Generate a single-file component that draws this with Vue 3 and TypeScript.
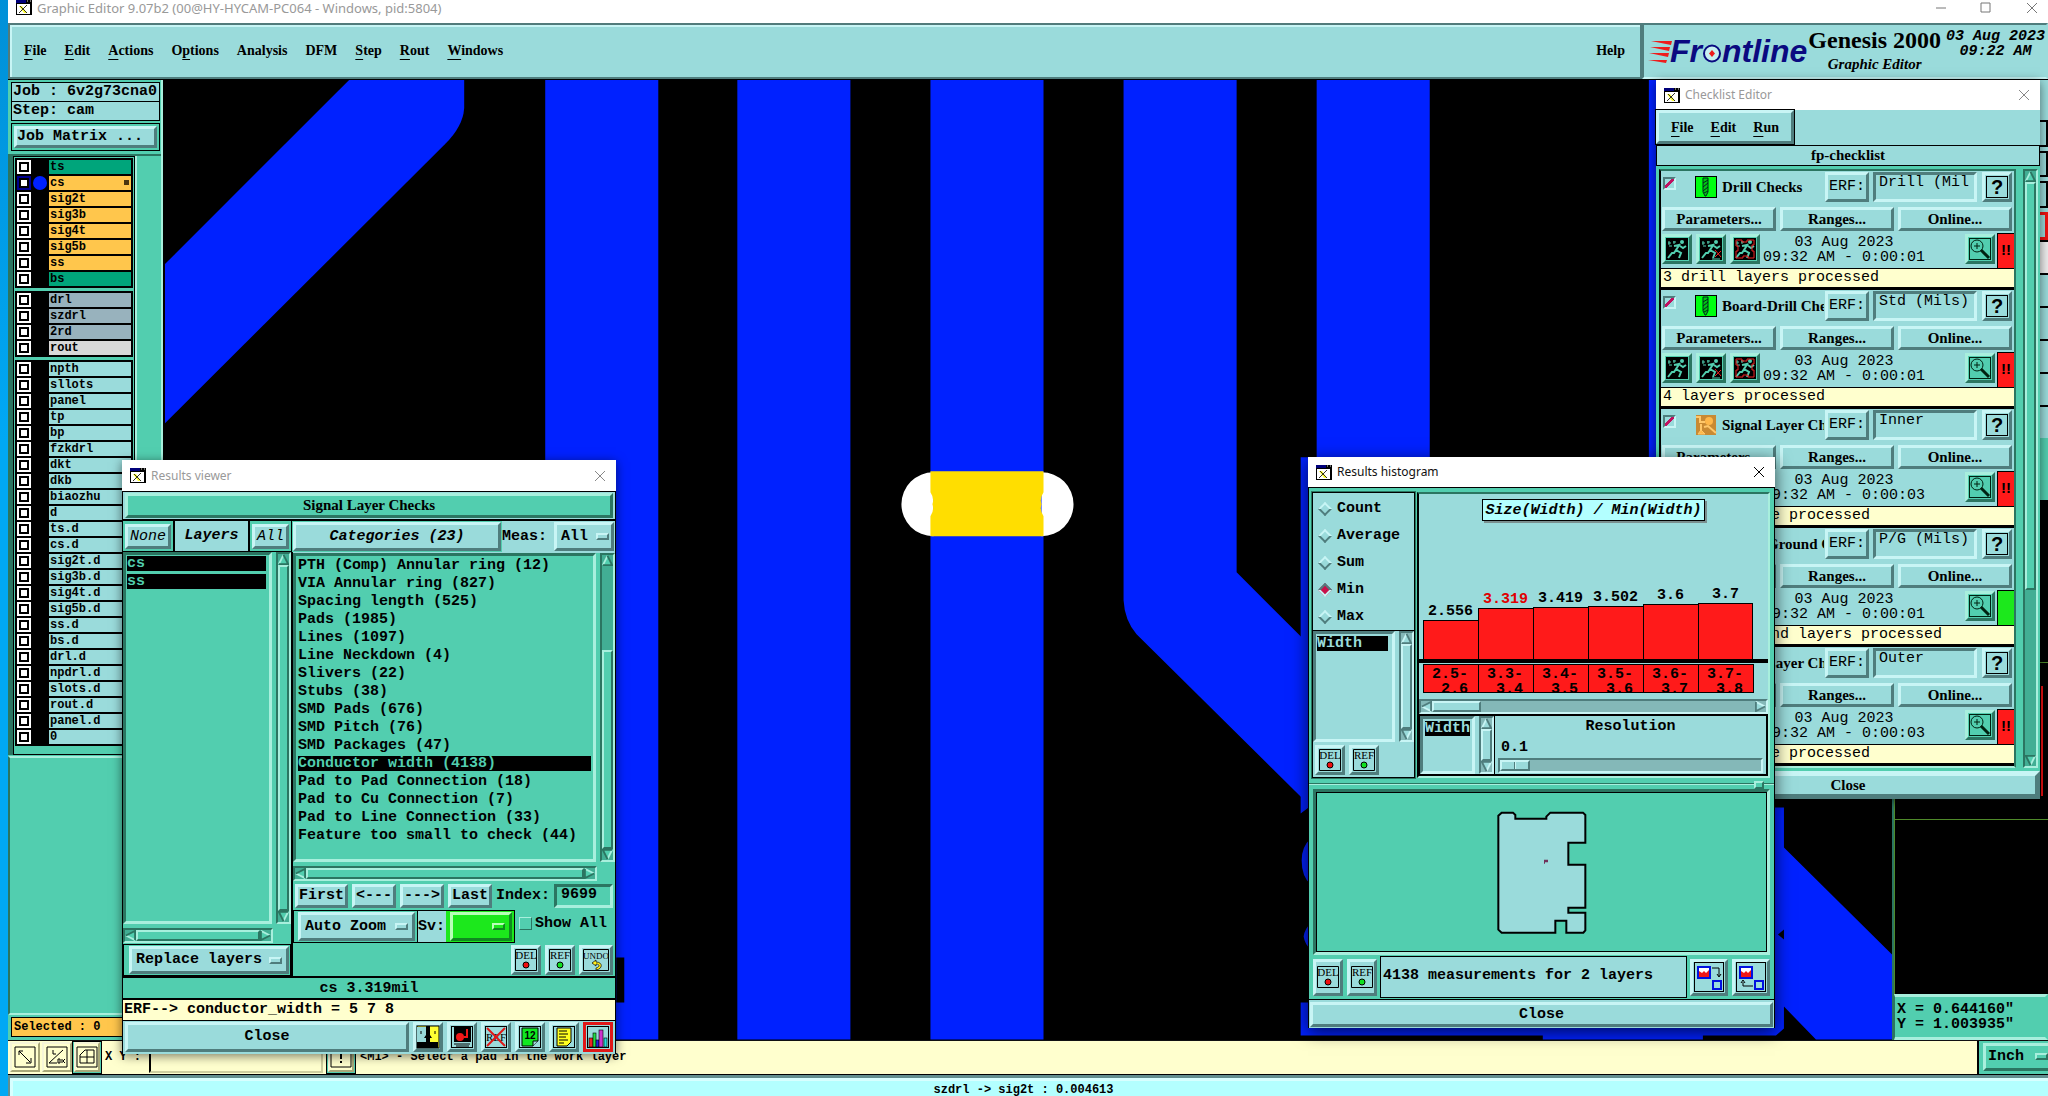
<script setup lang="ts">
import { h, ref } from 'vue'

interface Layer { name: string; kind: string; active?: boolean }
interface Check {
  name: string; icon: string; erf: string; time: string; message: string; ok?: boolean
}

const menus = [
  ['F', 'ile', ''], ['E', 'dit', ''], ['A', 'ctions', ''], ['p', 'tions', 'O'], ['', 'Analysis', ''],
  ['', 'DFM', ''], ['S', 'tep', ''], ['R', 'out', ''], ['W', 'indows', ''],
]
const checkMenus = [['F', 'ile'], ['E', 'dit'], ['R', 'un']]

const make = (kind: string, names: string): Layer[] => names.split(' ').map((name) => ({ name, kind }))
const layerGroups: Layer[][] = [
  [
    ...make('mask', 'ts'),
    { name: 'cs', kind: 'signal', active: true },
    ...make('signal', 'sig2t sig3b sig4t sig5b ss'),
    ...make('mask', 'bs'),
  ],
  [...make('drill', 'drl szdrl 2rd'), ...make('rout', 'rout')],
  make('misc', 'npth sllots panel tp bp fzkdrl dkt dkb biaozhu d ts.d cs.d sig2t.d sig3b.d sig4t.d sig5b.d ss.d bs.d drl.d npdrl.d slots.d rout.d panel.d 0'),
]

const categories = [
  'PTH (Comp) Annular ring (12)', 'VIA Annular ring (827)', 'Spacing length (525)', 'Pads (1985)',
  'Lines (1097)', 'Line Neckdown (4)', 'Slivers (22)', 'Stubs (38)', 'SMD Pads (676)', 'SMD Pitch (76)',
  'SMD Packages (47)', 'Conductor width (4138)', 'Pad to Pad Connection (18)', 'Pad to Cu Connection (7)',
  'Pad to Line Connection (33)', 'Feature too small to check (44)',
]
const selectedCategory = ref(11)

const checks: Check[] = [
  { name: 'Drill Checks', icon: 'drill', erf: 'Drill (Mil', time: '09:32 AM - 0:00:01', message: '3 drill layers processed' },
  { name: 'Board-Drill Che', icon: 'drill', erf: 'Std (Mils)', time: '09:32 AM - 0:00:01', message: '4 layers processed' },
  { name: 'Signal Layer Ch', icon: 'signal', erf: 'Inner', time: '09:32 AM - 0:00:03', message: '4 layers were processed' },
  { name: 'Power/Ground C', icon: 'signal', erf: 'P/G (Mils)', time: '09:32 AM - 0:00:01', message: '2 power ground layers processed', ok: true },
  { name: 'Signal Layer Ch', icon: 'signal', erf: 'Outer', time: '09:32 AM - 0:00:03', message: '2 layers were processed' },
]

const stats = ['Count', 'Average', 'Sum', 'Min', 'Max']
const stat = ref('Min')
const bars = [
  { value: '2.556', height: 39, from: '2.5-', to: '2.6' },
  { value: '3.319', height: 51, from: '3.3-', to: '3.4', current: true },
  { value: '3.419', height: 52, from: '3.4-', to: '3.5' },
  { value: '3.502', height: 53, from: '3.5-', to: '3.6' },
  { value: '3.6', height: 55, from: '3.6-', to: '3.7' },
  { value: '3.7', height: 56, from: '3.7-', to: '3.8' },
]
const footIcons = ['face', 'screen', 'noref', 'page12', 'note', 'chart']

/* Captioned action icon: a boxed word over a coloured mark */
const Tag = (props: { word: string; mark: string }) => {
  const w = props.word === 'UNDO' ? 28 : 24
  return h('svg', { width: w, height: 24, viewBox: `0 0 ${w} 24` }, [
    h('path', { d: `M1.500 1.500h${w - 3}v21h-${w - 3}z`, fill: 'none', stroke: '#000' }),
    h('text', { x: w / 2, y: 11, 'text-anchor': 'middle', 'font-family': 'Liberation Serif', 'font-weight': 'normal', 'font-size': w === 28 ? 9 : 11 }, props.word),
    props.mark === 'undo'
      ? h('path', { d: 'M14 12l-4 3 4 3v-2c4 0 4 3 0 4v2c7-1 7-8 0-8z', fill: '#ffef20', stroke: '#000', 'stroke-width': 0.7 })
      : h('circle', { cx: 12, cy: 17, r: 3, fill: props.mark, stroke: '#000' }),
  ])
}
Tag.props = ['word', 'mark']

/* Motif scroll bar: two arrows, with the thumb placed by percentages of the trough */
const arrow = (dir: string) =>
  h('svg', { class: ['arrow', dir], viewBox: '0 0 12 12' }, [
    h('path', { class: 'face', d: 'M6 1 L11 11 L1 11 Z' }),
    h('path', { class: 'lit', d: 'M6 1 L1 11' }),
    h('path', { class: 'dim', d: 'M6 1 L11 11 L1 11' }),
  ])
const ScrollBar = (props: { axis: string; start?: number; size?: number }) =>
  h('div', { class: ['sb', props.axis] }, [
    arrow(props.axis === 'v' ? 'to-up' : 'to-left'),
    h('div', { class: 'track' }, [
      h('div', { style: { flex: `${props.start ?? 0} 0 0` } }),
      h('div', { class: 'thumb', style: { flex: `${props.size ?? 100} 0 0` } }),
      h('div', { style: { flex: `${100 - (props.start ?? 0) - (props.size ?? 100)} 0 0` } }),
    ]),
    arrow(props.axis === 'v' ? 'to-down' : 'to-right'),
  ])
ScrollBar.props = ['axis', 'start', 'size']
</script>

<template>
  <div class="desktop">
    <svg class="defs" aria-hidden="true">
      <symbol id="xwin" viewBox="0 0 16 15">
        <rect width="16" height="15" fill="#000" /><rect x="1" y="4" width="13" height="10" fill="#fff" />
        <rect x="0" y="0" width="10" height="3" fill="#00007a" />
        <path d="M11 1h1M14 1h1" stroke="#ddd" />
        <path d="M3 6h3l5 7H8z" fill="#ffff30" /><path d="M11 5L3 13M4 6l7 7" stroke="#332" stroke-width="1" />
      </symbol>
      <symbol id="face" viewBox="0 0 24 24">
        <rect x="1" y="1" width="22" height="22" fill="#ff3" stroke="#000" /><rect x="1" y="2" width="10" height="20" fill="#98d8d8" />
        <path d="M10 1h4v9l2 3h-2v4h8v6H1v-6h9v-4H8l2-3z" /><path d="M5 6v3M19 6v3" stroke="#000" />
      </symbol>
      <symbol id="screen" viewBox="0 0 24 24">
        <rect x="1.500" y="1.500" width="21" height="21" fill="none" stroke="#000" />
        <rect x="4" y="2" width="17" height="15" /><circle cx="10" cy="12" r="4" fill="#f01818" /><path d="M14 12h3V4" stroke="#f01818" stroke-width="2" fill="none" />
        <path d="M4 19h16M6 21h13" stroke="#000" />
      </symbol>
      <symbol id="noref" viewBox="0 0 24 24">
        <rect x="1.500" y="1.500" width="21" height="21" fill="none" stroke="#000" />
        <path d="M3 3l18 18M21 3L3 21" stroke="#e01818" stroke-width="2" />
      </symbol>
      <symbol id="page12" viewBox="0 0 24 24">
        <rect x="1.500" y="1.500" width="21" height="21" fill="none" stroke="#000" />
        <path d="M4 3h16v13l-5 5H4z" fill="#10e820" stroke="#000" /><path d="M15 21v-5h5" fill="#9adbdb" stroke="#000" />
      </symbol>
      <symbol id="note" viewBox="0 0 24 24">
        <rect x="1.500" y="1.500" width="21" height="21" fill="none" stroke="#000" />
        <path d="M5 3h14v14l-4 4H5z" fill="#ffff20" stroke="#000" /><path d="M7 6h8M7 9h9M7 12h7M7 15h9M7 18h5" stroke="#000" />
      </symbol>
      <symbol id="chart" viewBox="0 0 24 24">
        <rect x="1.500" y="1.500" width="21" height="21" fill="none" stroke="#000" />
        <g stroke="#000" stroke-width=".6"><rect x="3" y="13" width="4" height="9" fill="#e22" /><rect x="7" y="8" width="3" height="14" fill="#2d4" /><rect x="10" y="15" width="3" height="7" fill="#22d" /><rect x="13" y="5" width="4" height="17" fill="#c3c" /><rect x="18" y="13" width="3" height="9" fill="#2dd" /></g>
      </symbol>
      <symbol id="drill" viewBox="0 0 22 22">
        <rect x=".5" y=".5" width="21" height="21" fill="#00ff10" stroke="#000" />
        <path d="M8 2h5v14l-2 4h-1l-2-4z" fill="#00c810" stroke="#022" /><path d="M8 7l5-3M8 11l5-4M8 15l5-4M9 17l4-2" stroke="#022" />
      </symbol>
      <symbol id="signal" viewBox="0 0 22 22">
        <rect x="1" y="1" width="20" height="20" fill="#c98a33" />
        <path d="M1 3h4v5h5M6 10v8M9 13l4-1 8 7" fill="none" stroke="#ffc86a" stroke-width="2" /><circle cx="14" cy="7" r="4" fill="#ffb84a" /><path d="M6 16l-3 4h7z" fill="#ffb84a" stroke="#ffc86a" />
      </symbol>
      <symbol id="run" viewBox="0 0 24 24">
        <rect x="1" y="1" width="22" height="22" />
        <circle cx="17" cy="5" r="2" fill="#52ceaf" />
        <path d="M15 7l-4 6 5 3-2 5M11 13l-2 3H7l-4 5M14 8l-5 1M15 9l3 2 3-2" fill="none" stroke="#52ceaf" stroke-width="2" />
        <path d="M3 6h3M8 5h3M4 9h3M4 4v4M9 4v3" stroke="#52ceaf" />
      </symbol>
      <symbol id="runx" viewBox="0 0 24 24">
        <use href="#run" width="24" height="24" /><path d="M16 13l6 7M22 14l-6 6" stroke="#e22" /><path d="M13 22h8" stroke="#52ceaf" />
      </symbol>
      <symbol id="runbox" viewBox="0 0 24 24">
        <use href="#run" width="24" height="24" /><path d="M3 3h6v2h5V3h7v5h-2v6h2v7h-6v-2h-5v2H3v-7h2V9H3z" fill="none" stroke="#e22" />
      </symbol>
      <symbol id="mag" viewBox="0 0 24 24">
        <rect x="1.500" y="1.500" width="21" height="21" fill="none" stroke="#021" />
        <circle cx="9" cy="9" r="6" fill="none" stroke="#021" /><path d="M9 6v6M6 9h6" stroke="#021" /><path d="M13 13l8 8" stroke="#021" stroke-width="3" />
      </symbol>
      <symbol id="todown" viewBox="0 0 32 32">
        <rect x="1.500" y="1.500" width="29" height="29" fill="none" stroke="#000" />
        <rect x="5" y="6" width="12" height="11" fill="#fff" stroke="#0010e0" stroke-width="2" /><path d="M6 16V10l3 2 2-2 2 2 3-3v7z" fill="#f01818" />
        <path d="M19 7h7v8M24 13l2 3 2-3" fill="none" stroke="#000" /><rect x="20" y="20" width="8" height="8" fill="none" stroke="#0010e0" stroke-width="2" />
      </symbol>
      <symbol id="toup" viewBox="0 0 32 32">
        <rect x="1.500" y="1.500" width="29" height="29" fill="none" stroke="#000" />
        <rect x="5" y="6" width="12" height="11" fill="#fff" stroke="#0010e0" stroke-width="2" /><path d="M6 16V10l3 2 2-2 2 2 3-3v7z" fill="#f01818" />
        <path d="M18 25H8v-4M6 22l2-3 2 3" fill="none" stroke="#000" /><rect x="20" y="20" width="8" height="8" fill="none" stroke="#0010e0" stroke-width="2" />
      </symbol>
    </svg>

    <!-- main editor -->
    <main class="editor">
      <header class="titlebar main-title">
        <svg class="xicon"><use href="#xwin" /></svg>
        <span>Graphic Editor 9.07b2 (00@HY-HYCAM-PC064 - Windows, pid:5804)</span>
        <svg class="win-controls" width="120" height="14" viewBox="0 0 120 14"><path d="M8 7h10M53 2h9v9h-9zM99 2l10 10M109 2L99 12" fill="none" stroke="#777" /></svg>
      </header>

      <div class="topbar">
        <nav class="menubar">
          <a v-for="m in menus" :key="m[1]" href="#">{{ m[2] }}<u>{{ m[0] }}</u>{{ m[1] }}</a>
          <a href="#" class="help">Help</a>
        </nav>
        <div class="brand">
          <div class="logo">
            <svg width="24" height="26" viewBox="0 0 24 26"><path d="M3 3h21l-1 4zM2 9h20l-1 4zM1 15h20l-1 4zM0 22h19l-1 3z" fill="#ee1c1c" /></svg>
            <span>Fr<svg class="ring" width="20" height="21" viewBox="0 0 20 21"><circle cx="10" cy="10.500" r="8" fill="#c8f0f0" stroke="#0a0a80" stroke-width="2" /><path d="M10 7l3 3.500-3 3.500-3-3.500z" fill="#ee1c1c" /></svg>ntline</span>
          </div>
          <div class="product"><strong>Genesis 2000</strong><em>Graphic Editor</em></div>
          <div class="clock">03 Aug 2023<br />09:22 AM</div>
        </div>
      </div>

      <div class="work">
        <aside class="side">
          <div class="job">Job : 6v2g73cna0</div>
          <div class="job">Step: cam</div>
          <div class="matrix"><button class="up">Job Matrix ...</button></div>
          <div class="layer-area">
            <div class="layers">
              <div v-for="(group, g) in layerGroups" :key="g" class="group">
                <label v-for="layer in group" :key="layer.name" class="layer" :class="[layer.kind, { active: layer.active }]">
                  <input type="checkbox" /><i></i><span>{{ layer.name }}</span>
                </label>
              </div>
            </div>
            <div class="gutter"></div>
          </div>
          <div class="side-rest"></div>
          <div class="selected">Selected : 0</div>
        </aside>

        <svg class="canvas" viewBox="163 80 1728 959" preserveAspectRatio="xMinYMin slice">
          <g fill="#0021ff">
            <path d="M349 80H464V108Q463 126 445 144L165 423V264Z" />
            <path d="M545 80h113v959H545zM737 80h113v959H737zM930 80h113v959H930zM1316 80h113v380h-113z" />
            <path d="M1123 80h113v492l74 74v160L1136 634Q1124 620 1123 600z" />
            <path d="M1648 80h12v400h-12z" />
            <path d="M1300 457h20v340l-12 10-8 6zM1301 860q0-14 9-22v46q-9-8-9-24zM1303 936q1-8 8-14v28q-7-6-8-14z" />
            <path d="M1300 1002h30v-10h440V807h13v40l108 107v85h-76l-32-33v22l-8 7h-73v4h-160v-4h-242z" />
          </g>
          <path d="M616 957h8v45h-8zM1783 929v10l-6-5z" />
          <path d="M933 472a32 32 0 0 0 0 64zM1041 472a32 32 0 0 1 0 64z" fill="#fff" />
          <path d="M930 471h113v21q-4 6-2 12-2 6 2 12v20H930v-20q4-6 2-12 2-6-2-12z" fill="#ffde00" />
        </svg>

        <aside class="right">
          <div class="tools"><i v-for="n in 3" :key="n"></i><i class="hot"></i></div>
          <div class="cells"><i class="blank"></i><i v-for="n in 5" :key="n"></i></div>
          <div class="tail"></div>
          <div class="overview"></div>
          <div class="coords"><div>X = 0.644160"</div><div>Y = 1.003935"</div></div>
        </aside>
      </div>

      <div class="bottombar">
        <button class="cream"><svg width="22" height="22" viewBox="0 0 22 22"><path d="M1 1h20v20H1zM5 5l11 11M5 9V5h4M17 12v5h-5" fill="none" stroke="#000" /></svg></button>
        <button class="cream"><svg width="22" height="22" viewBox="0 0 22 22"><path d="M1 1h20v20H1zM3 17h8M3 17L17 4M7 4v4h3M12 13v4h2v-4zM16 13v4M19 13l-2 2 2 2" fill="none" stroke="#000" /></svg></button>
        <div class="snap"><button class="cream"><svg width="22" height="22" viewBox="0 0 22 22"><path d="M1 1h20v20H1zM4 17V9l5-5h9v13zM4 11h14M11 4v13" fill="none" stroke="#000" /></svg></button></div>
        <label for="xy">X Y :</label>
        <input id="xy" type="text" value="" />
        <div class="snap"><button class="cream"><svg width="22" height="22" viewBox="0 0 22 22"><path d="M1 1h20v20H1z" fill="none" stroke="#000" /><path d="M10 4h2v9h-2zM10 15h2v2h-2z" /></svg></button></div>
        <p>&lt;M1&gt; - Select a pad in the work layer</p>
        <div class="unit"><div class="opt up"><select aria-label="Unit"><option>Inch</option></select><i></i></div></div>
      </div>
      <footer class="status"><div>szdrl -&gt; sig2t : 0.004613</div></footer>
    </main>

    <!-- checklist editor -->
    <section class="window checklist cyan">
      <header class="titlebar">
        <svg class="xicon"><use href="#xwin" /></svg><span>Checklist Editor</span>
        <svg class="close" viewBox="0 0 12 12"><path d="M1 1l10 10M11 1L1 11" /></svg>
      </header>
      <nav class="check-menu"><div class="up"><a v-for="m in checkMenus" :key="m[1]" href="#"><u>{{ m[0] }}</u>{{ m[1] }}</a></div></nav>
      <div class="check-name">fp-checklist</div>
      <div class="check-body">
        <div class="check-list">
          <article v-for="(c, i) in checks" :key="i" class="check">
            <div class="check-head">
              <input type="checkbox" checked :aria-label="c.name" />
              <svg width="22" height="22"><use :href="'#' + c.icon" /></svg>
              <b>{{ c.name }}</b>
              <button class="up erf">ERF:</button>
              <input class="down" type="text" :value="c.erf" aria-label="ERF model" />
              <button class="up q"><span>?</span></button>
            </div>
            <div class="check-tabs">
              <button class="up">Parameters...</button><button class="up">Ranges...</button><button class="up">Online...</button>
            </div>
            <div class="check-run">
              <button v-for="r in ['run', 'runx', 'runbox']" :key="r" class="up green" :aria-label="r"><svg width="24" height="24"><use :href="'#' + r" /></svg></button>
              <p>03 Aug 2023<br />{{ c.time }}</p>
              <button class="up green" aria-label="View results"><svg width="24" height="24"><use href="#mag" /></svg></button>
              <div class="flag" :class="{ ok: c.ok }">{{ c.ok ? '' : '!!' }}</div>
            </div>
            <div class="check-msg">{{ c.message }}</div>
          </article>
        </div>
        <ScrollBar class="green" axis="v" :start="0" :size="71" />
      </div>
      <div class="check-close"><button class="up">Close</button></div>
    </section>

    <!-- results viewer -->
    <section class="window viewer green">
      <header class="titlebar">
        <svg class="xicon"><use href="#xwin" /></svg><span>Results viewer</span>
        <svg class="close" viewBox="0 0 12 12"><path d="M1 1l10 10M11 1L1 11" /></svg>
      </header>
      <div class="viewer-name"><div class="up">Signal Layer Checks</div></div>
      <div class="viewer-cols">
        <div class="vleft">
          <div class="vhead">
            <div><button class="up cyan">None</button></div><strong>Layers</strong><div><button class="up cyan">All</button></div>
          </div>
          <div class="listrow">
            <ul class="down"><li class="sel">cs</li><li class="sel">ss</li></ul>
            <ScrollBar axis="v" />
          </div>
          <ScrollBar class="hbar" axis="h" />
          <div class="replace"><div class="opt up cyan"><select aria-label="Layer action"><option>Replace layers</option></select><i></i></div></div>
        </div>
        <div class="vright">
          <div class="cathead cyan">
            <button class="up cyan">Categories (23)</button>
            <label for="meas">Meas:</label>
            <div class="opt up cyan"><select id="meas"><option>All</option></select><i></i></div>
          </div>
          <div class="listrow cats">
            <ul class="down">
              <li v-for="(c, i) in categories" :key="c" :class="{ sel: i === selectedCategory }" @click="selectedCategory = i">{{ c }}</li>
            </ul>
            <ScrollBar axis="v" :start="30" :size="70" />
          </div>
          <ScrollBar class="hbar" axis="h" />
          <div class="index">
            <button class="up cyan">First</button><button class="up cyan">&lt;---</button><button class="up cyan">---&gt;</button><button class="up cyan">Last</button>
            <label for="idx">Index:</label><input id="idx" class="down" type="text" value="9699" />
          </div>
          <div class="zoomrow">
            <div class="zoombox"><div class="opt up cyan"><select aria-label="Zoom mode"><option>Auto Zoom</option></select><i></i></div></div>
            <label class="sv" for="sv">Sv:</label>
            <div class="svbox"><div class="opt up lime"><select id="sv"><option></option></select><i></i></div></div>
            <label class="showall"><input type="checkbox" />Show All</label>
          </div>
          <div class="vtools cyan">
            <button class="up"><Tag word="DEL" mark="#f01010" /></button>
            <button class="up"><Tag word="REF" mark="#10e020" /></button>
            <button class="up"><Tag word="UNDO" mark="undo" /></button>
          </div>
        </div>
      </div>
      <div class="measure">cs 3.319mil</div>
      <div class="erfline">ERF--&gt; conductor_width = 5 7 8</div>
      <div class="vfoot cyan">
        <button class="up grow">Close</button>
        <button v-for="f in footIcons" :key="f" class="up" :class="f" :aria-label="f">
          <svg width="24" height="24" viewBox="0 0 24 24">
            <text v-if="f === 'noref'" x="12" y="16" text-anchor="middle" class="ref-word">REF</text>
            <use :href="'#' + f" width="24" height="24" />
            <text v-if="f === 'page12'" x="12" y="14" text-anchor="middle" class="twelve">12</text>
          </svg>
        </button>
      </div>
    </section>

    <!-- results histogram -->
    <section class="window histo green">
      <header class="titlebar focus">
        <svg class="xicon"><use href="#xwin" /></svg><span>Results histogram</span>
        <svg class="close" viewBox="0 0 12 12"><path d="M1 1l10 10M11 1L1 11" /></svg>
      </header>
      <div class="hmain">
        <div class="hleft cyan">
          <div class="stats">
            <label v-for="s in stats" :key="s"><input v-model="stat" type="radio" name="stat" :value="s" />{{ s }}</label>
          </div>
          <div class="listrow">
            <ul class="down"><li class="sel">Width</li></ul>
            <ScrollBar axis="v" />
          </div>
          <div class="hbtns">
            <button class="up"><Tag word="DEL" mark="#f01010" /></button>
            <button class="up"><Tag word="REF" mark="#10e020" /></button>
          </div>
        </div>
        <div class="hright cyan">
          <div class="chart">
            <h2>Size(Width) / Min(Width)</h2>
            <div class="bars">
              <div v-for="b in bars" :key="b.value" class="bar">
                <span :class="{ current: b.current }">{{ b.value }}</span>
                <i :style="{ height: b.height + 'px' }"></i>
              </div>
            </div>
            <div class="ranges">
              <div v-for="b in bars" :key="b.from"><span>{{ b.from }}</span><span class="to">{{ b.to }}</span></div>
            </div>
            <ScrollBar axis="h" :start="0" :size="14" />
          </div>
          <div class="reso">
            <div class="listrow">
              <ul class="down"><li class="sel">Width</li></ul>
              <ScrollBar axis="v" />
            </div>
            <div class="slide">
              <label for="res">Resolution</label>
              <output for="res">0.1</output>
              <input id="res" type="range" min="0" max="10" value="0" />
            </div>
          </div>
        </div>
      </div>
      <div class="sash"><i class="up"></i></div>
      <div class="boardview down">
        <svg width="90" height="125" viewBox="620 115 270 375">
          <path d="M634 123H668L675 130V141H768V135L780 123H878L885 130V213H834V279H885V408H834V423H885V476L879 483H828V447H795V483H634L624 474V132Z" fill="#9adbdb" stroke="#000" stroke-width="6" />
          <path d="M761 264h12v8h-9v4h-3z" fill="#70305a" />
        </svg>
      </div>
      <div class="hinfo">
        <button class="up cyan"><Tag word="DEL" mark="#f01010" /></button>
        <button class="up cyan"><Tag word="REF" mark="#10e020" /></button>
        <p>4138 measurements for 2 layers</p>
        <button class="up cyan" aria-label="Move down"><svg width="32" height="32"><use href="#todown" /></svg></button>
        <button class="up cyan" aria-label="Move up"><svg width="32" height="32"><use href="#toup" /></svg></button>
      </div>
      <div class="hclose cyan"><button class="up">Close</button></div>
    </section>
  </div>
</template>

<style>
body { margin: 0; background: #000; overflow: hidden; }
</style>

<style scoped>
* { box-sizing: border-box; margin: 0; padding: 0; }
.desktop {
  --face: #9adbdb; --lt: #c8f5f5; --dk: #4f7d7d; --trough: #84b8b8;
  position: relative; min-height: 100vh; padding-left: 8px; overflow: hidden; display: flex;
  background: linear-gradient(#0090d8, #00a8f4 40%, #00a8f4);
  font: bold 15px/18px "Liberation Mono", monospace; color: #000;
}
.cyan { --face: #9adbdb; --lt: #c8f5f5; --dk: #4f7d7d; --trough: #84b8b8; }
.green { --face: #52ceaf; --lt: #a8efdd; --dk: #2b7561; --trough: #42ae94; }
.lime { --face: #1ce81c; --lt: #b8ffb8; --dk: #0f8a20; }
.defs { position: absolute; width: 0; height: 0; }
svg { display: block; flex: none; }
a { color: inherit; text-decoration: none; }
button, input, select { font: inherit; color: inherit; border: 0; background: transparent; border-radius: 0; outline: 0; }
select { appearance: none; }
ul { list-style: none; }
.up { background: var(--face); border: 3px solid; border-color: var(--lt) var(--dk) var(--dk) var(--lt); }
.down { background: var(--face); border: 3px solid; border-color: var(--dk) var(--lt) var(--lt) var(--dk); }
button.up { display: flex; align-items: center; justify-content: center; white-space: nowrap; }
.opt { display: grid; align-items: center; }
.opt select { grid-area: 1 / 1; width: 100%; padding-left: 4px; height: 100%; }
.opt > i { grid-area: 1 / 1; justify-self: end; width: 13px; height: 7px; margin-right: 4px; background: var(--face); border: 2px solid; border-color: var(--lt) var(--dk) var(--dk) var(--lt); pointer-events: none; }

/* scroll bars */
.sb { display: flex; flex: none; background: var(--trough); border: 2px solid; border-color: var(--dk) var(--lt) var(--lt) var(--dk); }
.sb.v { flex-direction: column; width: 15px; }
.sb.h { height: 15px; }
.sb :deep(.track) { flex: 1; display: flex; }
.sb.v :deep(.track) { flex-direction: column; }
.sb :deep(.thumb) { background: var(--face); border: 2px solid; border-color: var(--lt) var(--dk) var(--dk) var(--lt); }
.sb :deep(.arrow) { width: 11px; height: 11px; flex: none; display: block; }
.sb :deep(.to-down) { transform: rotate(180deg); }
.sb :deep(.to-left) { transform: rotate(-90deg); }
.sb :deep(.to-right) { transform: rotate(90deg); }
.sb :deep(path) { fill: none; stroke-width: 2; }
.sb :deep(.face) { fill: var(--face); }
.sb :deep(.lit) { stroke: var(--lt); }
.sb :deep(.dim) { stroke: var(--dk); }

/* title bars */
.titlebar { display: flex; align-items: center; height: 31px; padding: 0 10px 0 8px; gap: 5px; background: #fff; color: #999; font: 12px/16px "Noto Sans", sans-serif; }
.titlebar.focus { color: #111; }
.xicon { width: 16px; height: 15px; }
.close { width: 12px; height: 12px; margin-left: auto; fill: none; stroke: #888; }
.focus .close { stroke: #000; }
.main-title { height: 23px; padding: 0 0 8px 8px; font-size: 13px; }
.win-controls { margin-left: auto; }

/* editor frame */
.editor { flex: 1; min-width: 0; display: flex; flex-direction: column; background: #111; }
.topbar { display: flex; height: 57px; flex: none; background: var(--face); overflow: hidden; border-bottom: 1px solid #000; }
.menubar { flex: 1; display: flex; align-items: center; gap: 18px; padding: 0 15px 0 14px; border: 2px solid; border-color: #527b7b var(--dk) var(--dk) #527b7b; box-shadow: inset 2px 2px var(--lt); font: bold 14px/18px "Liberation Serif", serif; }
.menubar a, .check-menu a { height: 18px; }
u { text-decoration: underline; text-underline-offset: 4px; text-decoration-skip-ink: none; }
.help { margin-left: auto; }
.brand { display: flex; width: 406px; flex: none; border: 2px solid; border-color: var(--dk) transparent var(--lt) var(--dk); padding: 0 0 0 4px; white-space: nowrap; }
.logo { display: flex; align-items: center; width: 162px; color: #0a0a80; font: italic bold 32px/36px "Liberation Sans", sans-serif; }
.logo > svg { margin-right: -2px; }
.ring { display: inline-block; vertical-align: -2px; }
.product { display: flex; flex-direction: column; align-items: center; width: 140px; padding-top: 2px; font-family: "Liberation Serif", serif; }
.product strong { font-size: 24px; line-height: 26px; }
.product em { font-size: 15px; line-height: 22px; }
.clock { width: 104px; flex: none; font-style: italic; line-height: 15px; padding: 4px 0 0 3px; text-align: center; }

.work { flex: 1; display: flex; min-height: 0; background: #000; }
.side { width: 155px; flex: none; display: flex; flex-direction: column; background: #52ceaf; padding: 2px 1px 0 3px; border-right: 2px solid #a8efdd; }
.job { height: 20px; line-height: 18px; border: 1px solid #000; background: var(--face); padding-left: 1px; margin-bottom: -1px; overflow: hidden; white-space: nowrap; }
.matrix { height: 28px; border: 1px solid #000; margin-top: 3px; padding: 2px; }
.matrix button { width: 100%; height: 22px; justify-content: flex-start; }
.layer-area { display: flex; margin: 3px -1px 0 -3px; border-top: 2px solid #2b7561; border-left: 5px solid #2b7561; }
.layers { width: 122px; border: 1px solid #000; padding: 1px 1px 5px; }
.gutter { flex: 1; border-left: 2px solid #a8efdd; }
.group { background: #000; padding: 1px 2px; margin-bottom: 3px; }
.layer { display: flex; height: 16px; align-items: center; font-size: 12px; line-height: 14px; }
.layer input { appearance: none; width: 14px; height: 14px; background: #fff; box-shadow: inset 0 0 0 2px #fff, inset 0 0 0 4px #000; }
.layer i { width: 14px; height: 14px; margin: 0 2px; }
.layer.active i { background: #0021ff; border-radius: 50%; }
.layer.active input { box-shadow: inset 0 0 0 2px #000090, inset 0 0 0 4px #000; }
.layer.active span::after { content: ""; float: right; width: 5px; height: 5px; margin: 4px 2px; background: #4a3510; }
.layer span { flex: 1; height: 14px; padding-left: 1px; }
.mask span { background: #00a57b; }
.signal span { background: #ffc64c; }
.drill span { background: #98b2bd; }
.rout span { background: #d8d8d8; }
.misc span { background: #9adbdb; }
.side-rest { flex: 1; margin: 1px -1px 2px -3px; border: 2px solid; border-color: #a8efdd #2b7561 #a8efdd #2b7561; }
.selected { height: 20px; border: 1px solid #000; background: #ffc64c; font-size: 12px; line-height: 18px; padding-left: 2px; margin-bottom: 3px; }
.canvas { flex: 1; width: 0; min-width: 0; height: auto; }
.right { width: 156px; flex: none; display: flex; flex-direction: column; border-left: 2px solid #2b7561; background: #52ceaf; }
.tools { height: 160px; padding-top: 40px; display: flex; flex-direction: column; gap: 4px; background: #9adbdb; }
.tools i { flex: 1; border: 2px solid #000; }
.tools .hot { border: 3px solid #e11; }
.cells { height: 198px; background: #000; display: flex; flex-direction: column; gap: 2px; padding-top: 2px; }
.cells i { flex: 1; background: #9adbdb; }
.cells .blank { background: #eee; }
.tail { height: 62px; }
.overview { flex: 1; border-left: 1px solid #4f8a2a; background: linear-gradient(#e11, #e11) 146px 186px / 2px 110px no-repeat, linear-gradient(#4f8a2a, #4f8a2a) 0 162px / 100% 1px no-repeat, linear-gradient(#4f8a2a, #4f8a2a) 0 319px / 100% 1px no-repeat #000; }
.coords { height: 46px; border: 3px solid; border-color: #a8efdd transparent #a8efdd #2b7561; border-left-width: 1px; padding: 5px 2px; line-height: 15px; }

.bottombar { display: flex; align-items: center; height: 34px; flex: none; margin-top: 1px; border-bottom: 1px solid #000; background: #ffffce; font-size: 12px; }
.cream { width: 30px; height: 30px; margin-left: 2px; border: 2px solid; border-color: #f5f5d8 #a8a878 #a8a878 #f5f5d8; display: flex; align-items: center; justify-content: center; background: #ffffce; }
.snap { display: flex; align-items: center; height: 33px; background: #52ceaf; border: 1px solid #000; padding-right: 1px; }
.snap .cream { margin: 0 0 0 1px; width: 26px; }
.bottombar label { padding: 0 8px 0 3px; }
.bottombar > input { width: 174px; height: 32px; margin-right: 3px; border: 2px solid; border-color: #000 #cfcfa0 #cfcfa0 #000; background: #ffffce; }
.bottombar p { flex: 1; padding-left: 4px; }
.unit { width: 71px; height: 33px; background: #52ceaf; border-left: 2px solid #000; padding: 2px 0 2px 4px; font-size: 15px; overflow: hidden; --face: #52ceaf; --lt: #a8efdd; --dk: #2b7561; }
.unit .opt { width: 72px; height: 28px; }
.unit .opt select { padding-left: 2px; }
.status { flex: none; height: 24px; background: #628f8f; padding: 3px 0 0 2px; }
.status div { height: 21px; border: solid #d8ffff; border-width: 3px 0 0 3px; background: #b3ffff; text-align: center; font-size: 12px; line-height: 18px; padding-right: 14px; }

/* floating windows */
.window { position: absolute; background: var(--face); box-shadow: 0 2px 10px #0008; white-space: nowrap; }

.checklist { left: 1656px; top: 80px; width: 384px; font-family: "Liberation Serif", serif; }
.checklist .titlebar { height: 30px; }
.check-menu > div { display: flex; gap: 17px; width: 138px; height: 34px; padding: 6px 0 0 12px; outline: 1px solid #000; font-size: 14px; }
.check-name { height: 21px; margin-top: 1px; border: 1px solid #000; text-align: center; line-height: 18px; font-size: 15px; }
.check-body { display: flex; gap: 5px; padding: 3px 2px 3px 3px; background: #52ceaf; }
.check-list { flex: 1; min-width: 0; border: solid; border-width: 2px; border-color: #2b7561 #2b7561 #a8efdd #000; margin-right: 2px; }
.check { height: 119px; border-bottom: 3px solid #000; background: var(--face); }
.check-head { display: grid; grid-template-columns: 31px 26px 102px 47px 104px 1fr; column-gap: 1px; padding: 1px 2px 5px; height: 36px; }
.check-head > input[type="checkbox"] { appearance: none; width: 13px; height: 13px; margin-top: 5px; border: 2px solid; border-color: var(--dk) var(--lt) var(--lt) var(--dk); background: linear-gradient(135deg, transparent 40%, #c01060 40%, #c01060 60%, transparent 60%) 0 4px / 5px 6px no-repeat, linear-gradient(-45deg, transparent 40%, #c01060 40%, #c01060 62%, transparent 62%); }
.check-head > svg { margin-top: 4px; }
.check-head b { overflow: hidden; line-height: 30px; }
.check-head .erf { width: 44px; height: 30px; font: 15px/18px "Liberation Mono", monospace; }
.check-head .down { min-width: 0; height: 30px; padding: 0 0 9px 3px; font: 15px/18px "Liberation Mono", monospace; }
.q { width: 30px; height: 30px; justify-self: end; }
.q span { width: 22px; height: 22px; border: 1px solid #000; font: bold 20px/20px "Liberation Sans", sans-serif; }
.check-tabs { display: grid; grid-template-columns: repeat(3, 1fr); gap: 4px; padding: 0 2px 0 1px; }
.check-tabs button { height: 24px; }
.check-run { display: flex; gap: 4px; padding: 2px 0 0 1px; height: 37px; font: 15px/15px "Liberation Mono", monospace; }
.check-run button { width: 30px; height: 30px; margin-top: 1px; }
.check-run p { flex: 1; text-align: center; padding: 2px 35px 0 0; margin-left: -2px; }
.flag { width: 17px; height: 35px; margin-left: -2px; border: 1px solid #000; border-width: 1px 0 0 1px; background: #ff1a1a; font: bold 15px/32px "Liberation Sans", sans-serif; text-align: center; }
.flag.ok { background: #1ce81c; }
.check-msg { height: 19px; border-top: 1px solid #000; background: #ffffce; padding-left: 2px; font: 15px/18px "Liberation Mono", monospace; }
.check-close { border: 2px solid; border-color: var(--lt) var(--dk) var(--dk) var(--lt); }
.check-close button { width: 100%; height: 24px; }

.listrow { display: flex; justify-content: space-between; gap: 4px; }
.listrow ul { flex: 1; padding: 1px; }
.listrow li { height: 15px; line-height: 15px; margin-bottom: 3px; cursor: default; }
li.sel { background: #000; color: var(--face); }

.viewer { left: 122px; top: 460px; width: 494px; border: solid #000; border-width: 0 1px; }
.viewer .titlebar { margin: 0 -1px; }
.viewer-name { height: 30px; border: solid #000; border-width: 1px 0 2px; padding: 1px 2px; background: #9adbdb; font-family: "Liberation Serif", serif; }
.viewer-name .up { height: 25px; line-height: 19px; text-align: center; }
.viewer-cols { display: flex; border-bottom: 2px solid #000; }
.vleft { width: 170px; flex: none; display: flex; flex-direction: column; border-right: 2px solid #000; }
.vhead { display: flex; height: 31px; border-bottom: 1px solid #000; font-style: italic; }
.vhead div { padding: 3px 2px 2px; }
.vhead button { height: 25px; font-weight: normal; font-style: italic; padding: 0 2px; }
.vhead strong { flex: 1; text-align: center; line-height: 30px; background: #9adbdb; border: solid #000; border-width: 0 2px; }
.vleft .listrow { flex: 1; }
.vleft ul { padding-right: 3px; }
.hbar { margin: 4px 18px 0 0; }
.replace { height: 32px; margin-top: 1px; border: 1px solid #000; padding: 1px 1px 1px 5px; }
.replace .opt { height: 28px; }
.vright { flex: 1; min-width: 0; display: flex; flex-direction: column; }
.cathead { display: flex; height: 32px; background: #9adbdb; padding: 1px 1px 0 0; }
.cathead button { width: 208px; height: 29px; font-style: italic; outline: 1px solid #52ceaf; }
.cathead label { line-height: 29px; flex: 1; padding-left: 1px; }
.cathead .opt { width: 60px; height: 29px; }
.cathead .opt i { margin-right: 2px; }
.cats ul { height: 309px; padding: 2px 2px 0; }
.index { display: flex; gap: 4px; padding: 3px 2px 2px; }
.index button { height: 24px; padding: 0 1px; }
.index label { line-height: 24px; width: 54px; }
.index input { flex: 1; min-width: 0; height: 24px; padding: 0 0 3px 4px; }
.zoomrow { display: flex; height: 33px; }
.zoombox, .svbox { border: 1px solid #000; padding: 1px 2px 1px 4px; }
.zoombox { width: 125px; }
.svbox { width: 69px; background: #1ce81c; border-left: 0; }
.zoomrow .opt { height: 29px; }
.sv { width: 28px; line-height: 31px; border: solid #000; border-width: 1px 0; background: #9adbdb; }
.showall { display: flex; align-items: flex-start; gap: 3px; padding: 5px 0 0 4px; }
.showall input { appearance: none; width: 13px; height: 13px; margin-top: 2px; border: 1px solid; border-color: #a8efdd #2b7561 #2b7561 #a8efdd; }
.vtools { display: flex; justify-content: flex-end; gap: 4px; padding: 2px 2px 1px; background: #52ceaf; margin-top: auto; }
.vtools button, .hbtns button { height: 30px; }
.measure { height: 22px; line-height: 21px; text-align: center; border-bottom: 2px solid #000; }
.erfline { height: 21px; line-height: 19px; padding-left: 1px; background: #ffffce; border-bottom: 1px solid #000; }
.vfoot { display: flex; gap: 4px; padding: 1px 2px 2px; background: #9adbdb; }
.vfoot button { height: 30px; width: 30px; }
.vfoot .grow { flex: 1; }
.vfoot .chart { border-color: #e01818; background: #9adbdb; }
.ref-word { font: 11px "Liberation Serif", serif; }
.twelve { font: bold 10px "Liberation Sans", sans-serif; }

.histo { left: 1308px; top: 457px; width: 467px; box-shadow: 0 4px 16px #000a; border: solid #000; border-width: 0 1px; }
.histo .titlebar { margin: 0 -1px; border-bottom: 1px solid #000; }
.hmain { display: flex; gap: 2px; padding: 4px 4px 3px 3px; }
.hleft { width: 103px; border: 1px solid #000; outline: 1px solid #2b7561; background: var(--face); display: flex; flex-direction: column; }
.stats { border-bottom: 1px solid #000; padding: 2px 0 0 5px; }
.stats label { display: flex; align-items: center; height: 27px; gap: 6px; }
.stats input { appearance: none; width: 10px; height: 10px; margin: 0 1px 0 2px; border: 2px solid; border-color: var(--lt) var(--dk) var(--dk) var(--lt); transform: rotate(45deg); }
.stats input:checked { background: #c8104a; border-color: var(--dk) var(--lt) var(--lt) var(--dk); }
.hleft .listrow { flex: 1; }
.hleft ul { padding: 2px 4px 0 1px; }
.hbtns { display: flex; gap: 4px; padding: 3px 2px 2px; }
.hright { flex: 1; border: 2px solid; border-color: #2b7561 #a8efdd #a8efdd #000; background: var(--face); }
.chart h2 { width: 223px; height: 22px; margin: 5px auto 0; border: 1px solid #000; background: #b3ffff; box-shadow: 2px 2px #7a8f8f; text-align: center; font: italic bold 15px/22px "Liberation Mono", monospace; }
.bars { display: flex; align-items: flex-end; height: 142px; padding-left: 4px; border-bottom: 4px solid #000; }
.bar { width: 55px; text-align: center; }
.bar i { display: block; background: #ff1a1a; border: 1px solid #000; border-width: 1px 0 0 1px; }
.bar:last-child i { border-right-width: 1px; }
.bar span { display: block; line-height: 17px; }
.bar .current { color: #e00000; }
.ranges { display: flex; margin: 1px 0 6px 4px; }
.ranges div { width: 55px; height: 29px; border: 1px solid #000; border-right-width: 0; background: #ff1a1a; padding: 2px 0 0 8px; line-height: 15px; }
.ranges div:last-child { width: 56px; border-right-width: 1px; }
.ranges span { display: block; }
.ranges .to { padding-left: 9px; }
.reso { display: flex; border: 2px solid #000; border-width: 2px 2px 2px 1px; }
.reso .listrow { width: 74px; }
.reso ul { padding: 2px; }
.slide { flex: 1; min-width: 0; display: flex; flex-direction: column; border-left: 1px solid #000; padding: 1px 3px; }
.slide label { text-align: center; line-height: 20px; }
.slide output { padding-left: 3px; line-height: 21px; }
.slide input { appearance: none; width: 100%; height: 15px; background: var(--trough); border: 2px solid; border-color: var(--dk) var(--lt) var(--lt) var(--dk); }
.slide input::-webkit-slider-thumb { appearance: none; width: 30px; height: 11px; border: 2px solid; border-color: #c8f5f5 #4f7d7d #4f7d7d #c8f5f5; background: linear-gradient(90deg, #9adbdb 12px, #4f7d7d 12px, #4f7d7d 13px, #c8f5f5 13px, #c8f5f5 14px, #9adbdb 14px); }
.sash { height: 8px; background: linear-gradient(#2b7561, #2b7561) 0 2px / 100% 1px no-repeat, linear-gradient(#a8efdd, #a8efdd) 0 3px / 100% 1px no-repeat; }
.sash i { display: block; width: 10px; height: 8px; border-width: 2px; margin: 0 10px 0 auto; }
.boardview { display: flex; justify-content: center; align-items: center; height: 166px; margin: 0 4px; box-shadow: inset 0 0 0 1px #000; }
.hinfo { display: flex; align-items: center; gap: 4px; height: 45px; padding: 0 4px; border-bottom: 1px solid #000; }
.hinfo button { height: 37px; }
.hinfo p { flex: 1; height: 42px; line-height: 38px; padding-left: 2px; border: 1px solid #000; background: #9adbdb; margin: 0 -1px; }
.hclose { background: #9adbdb; padding: 2px 1px 1px; }
.hclose button { width: 100%; height: 25px; }
</style>
